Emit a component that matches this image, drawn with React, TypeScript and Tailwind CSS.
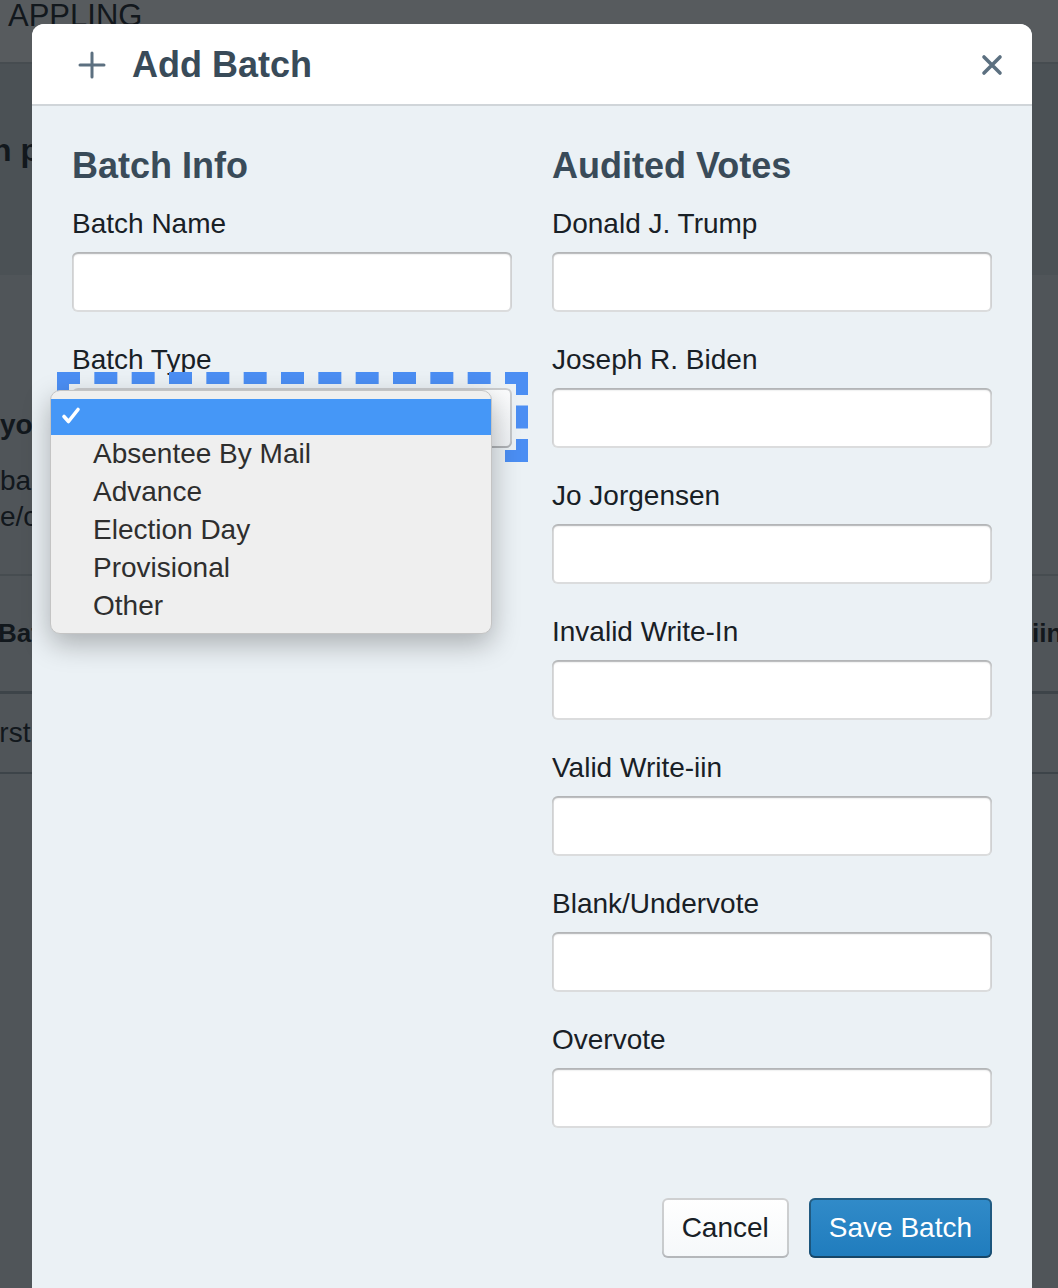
import React from 'react'

const voteFields = [
  'Donald J. Trump',
  'Joseph R. Biden',
  'Jo Jorgensen',
  'Invalid Write-In',
  'Valid Write-iin',
  'Blank/Undervote',
  'Overvote',
]

const batchTypes = ['Absentee By Mail', 'Advance', 'Election Day', 'Provisional', 'Other']

function Field({ label }: { label: string }) {
  return (
    <div className="mb-[30px]">
      <label className="block text-[28px] leading-[36px] text-[#182026] mb-[10px]">{label}</label>
      <input
        type="text"
        className="block w-full h-[60px] rounded-[6px] bg-white outline-none shadow-[inset_0_0_0_2px_rgba(16,22,26,0.15),inset_0_2px_2px_rgba(16,22,26,0.2)]"
      />
    </div>
  )
}

// dashed focus ring, dashes begin and end on the corners like the browser draws them
function FocusRing({ w, h }: { w: number; h: number }) {
  const t = 12
  const dash = 23
  const gapFor = (len: number) => {
    const n = Math.max(1, Math.round((len - dash) / 37))
    return (len - dash) / n - dash
  }
  const gx = gapFor(w)
  const gy = gapFor(h)
  return (
    <svg width={w} height={h} className="absolute left-[-15px] top-[-16px]">
      <g stroke="#4b8ef3" strokeWidth={t} fill="none">
        <line x1={0} y1={t / 2} x2={w} y2={t / 2} strokeDasharray={`${dash} ${gx}`} />
        <line x1={0} y1={h - t / 2} x2={w} y2={h - t / 2} strokeDasharray={`${dash} ${gx}`} />
        <line x1={t / 2} y1={0} x2={t / 2} y2={h} strokeDasharray={`${dash} ${gy}`} />
        <line x1={w - t / 2} y1={0} x2={w - t / 2} y2={h} strokeDasharray={`${dash} ${gy}`} />
      </g>
    </svg>
  )
}

function BatchTypeSelect() {
  return (
    <div className="relative">
      <div className="h-[60px] rounded-[6px] bg-gradient-to-b from-[#fbfcfd] to-[#eef1f4] shadow-[inset_0_0_0_2px_rgba(16,22,26,0.2),inset_0_-2px_0_rgba(16,22,26,0.1)]" />
      <FocusRing w={471} h={90} />

      {/* native popup that is open */}
      <div className="absolute left-[-22px] top-[2px] w-[442px] z-10 rounded-[10px] bg-[#efefef] border border-[#c4c4c4] shadow-[0_10px_28px_rgba(0,0,0,0.28)] py-[8px]">
        <div className="h-[36px] bg-[#4597f7] relative">
          <svg width="20" height="20" viewBox="0 0 20 20" className="absolute left-[10px] top-[7px]">
            <path d="M3 10.5 L7.5 15.5 L17 3.5" stroke="#fff" strokeWidth="3.6" fill="none" strokeLinecap="round" strokeLinejoin="round" />
          </svg>
        </div>
        {batchTypes.map(t => (
          <div key={t} className="h-[38px] pl-[42px] text-[28px] leading-[37px] text-[#2e2e2e]">
            {t}
          </div>
        ))}
      </div>
    </div>
  )
}

function AddBatchDialog() {
  return (
    <div className="absolute left-[32px] top-[24px] w-[1000px] h-[1300px] rounded-t-[12px] bg-[#ebf1f5] overflow-visible">
      {/* Header */}
      <div className="h-[82px] flex items-center bg-white rounded-t-[12px] border-b-2 border-[#d0d5d9] pt-[2px]">
        <svg width="28" height="28" viewBox="0 0 28 28" className="ml-[46px]">
          <path d="M14 2 V26 M2 14 H26" stroke="#5c7080" strokeWidth="3" strokeLinecap="round" />
        </svg>
        <h3 className="ml-[26px] text-[36px] leading-[44px] font-bold text-[#394b59]">Add Batch</h3>
        <button className="ml-auto mr-[20px] w-[40px] h-[40px] flex items-center justify-center">
          <svg width="22" height="22" viewBox="0 0 22 22">
            <path d="M3 3 L19 19 M19 3 L3 19" stroke="#5c7080" strokeWidth="3.6" strokeLinecap="round" />
          </svg>
        </button>
      </div>

      {/* Body */}
      <div className="grid grid-cols-2 gap-[40px] px-[40px] pt-[38px]">
        <div>
          <h4 className="text-[36px] leading-[44px] font-bold text-[#394b59] mb-[18px]">Batch Info</h4>
          <Field label="Batch Name" />
          <div className="mb-[30px]">
            <label className="block text-[28px] leading-[36px] text-[#182026] mb-[10px]">Batch Type</label>
            <BatchTypeSelect />
          </div>
        </div>
        <div>
          <h4 className="text-[36px] leading-[44px] font-bold text-[#394b59] mb-[18px]">Audited Votes</h4>
          {voteFields.map(f => (
            <Field key={f} label={f} />
          ))}
        </div>
      </div>

      {/* Footer */}
      <div className="flex justify-end gap-[20px] px-[40px] mt-[40px]">
        <button className="h-[60px] px-[20px] rounded-[6px] text-[28px] text-[#182026] bg-gradient-to-b from-white to-[#f5f8fa] shadow-[inset_0_0_0_2px_rgba(16,22,26,0.2),inset_0_-2px_0_rgba(16,22,26,0.1)]">
          Cancel
        </button>
        <button className="h-[60px] px-[20px] rounded-[6px] text-[28px] text-white bg-gradient-to-b from-[#318bc9] to-[#1f7cbd] shadow-[inset_0_0_0_2px_rgba(16,22,26,0.4),inset_0_-2px_0_rgba(16,22,26,0.2)]">
          Save Batch
        </button>
      </div>
    </div>
  )
}

export default function App() {
  return (
    <div className="relative w-[1058px] h-[1288px] overflow-hidden bg-[#e6ebef] font-['Liberation_Sans',Arial,sans-serif]">
      {/* page behind the dialog */}
      <div className="h-[64px] bg-white border-b-2 border-[#c5cbd0]">
        <div className="pl-[8px] text-[31px] leading-[32px] text-[#182026]">APPLING</div>
      </div>
      <div className="h-[211px] bg-[#d6dde2] pt-[66px]">
        <div className="-ml-[8px] text-[32px] leading-[40px] font-bold text-[#182026] whitespace-nowrap">n progress</div>
      </div>
      <div className="bg-[#e6ebef]">
        <div className="pt-[132px] text-[28px] leading-[36px] font-bold text-[#182026] whitespace-nowrap">your batches</div>
        <div className="pt-[20px] text-[28px] leading-[36px] text-[#182026] whitespace-nowrap">ba</div>
        <div className="text-[28px] leading-[36px] text-[#182026] whitespace-nowrap">e/c</div>
        <div className="mt-[39px] h-[117px] border-t-2 border-[#c5cbd0] flex items-center text-[26px] font-bold text-[#182026] whitespace-nowrap">
          <span className="w-[893px] shrink-0 -ml-[2px]">Batch Name</span>
          <span>Valid Write-iin</span>
        </div>
        <div className="h-[83px] border-t-[3px] border-[#a9b1b7] border-b-2 flex items-center text-[28px] text-[#182026] whitespace-nowrap">
          <span className="-ml-[24px]">First</span>
        </div>
      </div>

      {/* overlay */}
      <div className="absolute inset-0 bg-[rgba(16,22,26,0.7)]" />

      <AddBatchDialog />
    </div>
  )
}
